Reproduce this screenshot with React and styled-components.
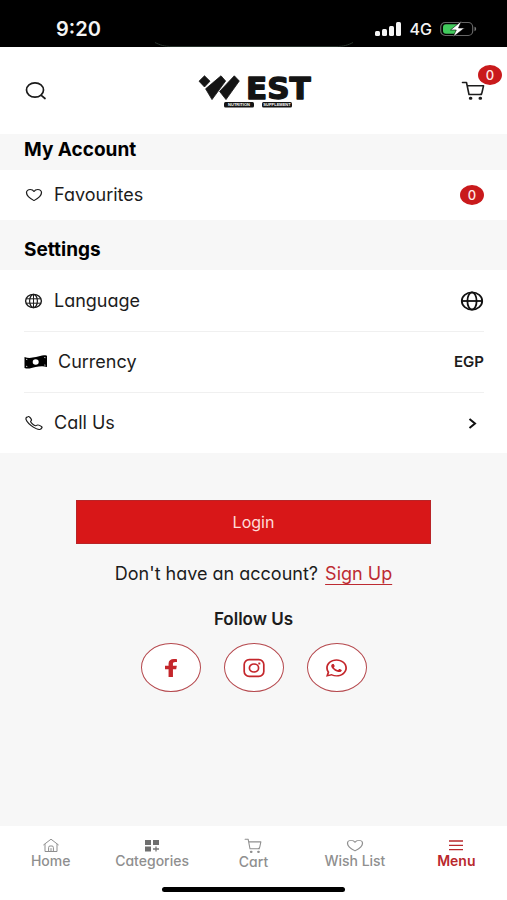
import React from 'react'
import styled, {createGlobalStyle} from 'styled-components'
import {FaFacebookF, FaWhatsapp} from 'react-icons/fa'
import {IoCallOutline, IoHeartOutline} from 'react-icons/io5'

const GlobalStyle = createGlobalStyle`
  * {
    box-sizing: border-box;
  }
  body {
    margin: 0;
    background: #f7f7f7;
    font-family: Inter, "Liberation Sans", sans-serif;
    font-feature-settings: "cv11";
    color: #1c1c1c;
  }
  button {
    font: inherit;
    font-feature-settings: inherit;
    color: inherit;
    background: none;
    border: 0;
    padding: 0;
    cursor: pointer;
  }
  a {
    color: inherit;
    text-decoration: none;
  }
  svg {
    display: block;
    flex-shrink: 0;
  }
`

const Page = styled.div`
  display: flex;
  flex-direction: column;
  min-height: 100vh;
`

const StatusBar = styled.div`
  position: relative;
  display: flex;
  justify-content: space-between;
  height: 47px;
  padding: 11px 30px 0 56px;
  background: #000000;
  color: #f4f4f4;
`

const IslandEdge = styled.svg`
  position: absolute;
  bottom: 0;
  left: 50%;
  transform: translateX(-50%);
`

const Time = styled.span`
  font-size: 20px;
  font-weight: 600;
  line-height: 36px;
`

const StatusIcons = styled.div`
  display: flex;
  align-items: center;
  gap: 8px;
  height: 36px;
`

const Network = styled.span`
  font-size: 16px;
  font-weight: 500;
  line-height: 20px;
`

const Header = styled.header`
  display: grid;
  grid-template-columns: 1fr auto 1fr;
  align-items: center;
  height: 87px;
  padding: 0 22px 0 24px;
  background: #ffffff;
`

const CartButton = styled.button`
  position: relative;
  justify-self: end;
`

const Badge = styled.span`
  display: flex;
  align-items: center;
  justify-content: center;
  width: 24px;
  height: 20px;
  border-radius: 50%;
  background: #c91a1c;
  color: #ffe9e6;
  font-size: 13px;
  font-weight: 500;
  line-height: 20px;
`

const CartBadge = styled(Badge)`
  position: absolute;
  top: -16px;
  right: -17px;
`

const SectionTitle = styled.h2`
  margin: 0;
  padding: ${(props) => (props.$tall ? '18px 24px 8px' : '4px 24px 8px')};
  font-size: 19px;
  font-weight: 700;
  line-height: 24px;
  color: #000000;
`

const Panel = styled.div`
  padding: 0 23px 0 24px;
  background: #ffffff;
`

const Row = styled.button`
  display: flex;
  align-items: center;
  justify-content: space-between;
  width: 100%;
  height: ${(props) => (props.$short ? '50px' : '61px')};
  text-align: left;

  & + & {
    border-top: 1px solid #f0f0f0;
  }
`

const RowLabel = styled.span`
  display: flex;
  align-items: center;
  gap: 10px;
  font-size: 18px;
  line-height: 24px;
`

const CurrencyCode = styled.span`
  font-size: 15px;
  font-weight: 600;
  line-height: 20px;
`

const ChevronBox = styled.span`
  padding-right: 7px;
`

const Account = styled.main`
  flex: 1;
  display: flex;
  flex-direction: column;
  align-items: center;
  padding: 47px 0;
`

const LoginButton = styled.button`
  && {
    width: 70%;
    height: 44px;
    border: 1px solid #b92427;
    background: #d81718;
    color: #ffdcd8;
    font-size: 16px;
  }
`

const SignUpLine = styled.p`
  margin: 18px 0 0;
  font-size: 18px;
  line-height: 24px;
`

const SignUpLink = styled.a`
  margin-left: 2px;
  color: #bd2b32;
  text-decoration: underline;
  text-decoration-thickness: 1px;
  text-underline-offset: 4px;
`

const FollowTitle = styled.h3`
  margin: 21px 0 12px;
  font-size: 17px;
  font-weight: 600;
  line-height: 24px;
`

const SocialList = styled.div`
  display: flex;
  gap: 23px;
`

const SocialLink = styled.a`
  display: flex;
  align-items: center;
  justify-content: center;
  width: 60px;
  height: 49px;
  border: 1px solid #b5484d;
  border-radius: 50%;
  background: #ffffff;
  color: #c4262b;
`

const BottomBar = styled.footer`
  padding-bottom: 8px;
  background: #ffffff;
`

const Tabs = styled.nav`
  display: grid;
  grid-template-columns: repeat(5, 1fr);
  height: 61px;
  padding-top: 12px;
`

const Tab = styled.a`
  display: flex;
  flex-direction: column;
  align-items: center;
  color: ${(props) => (props.$active ? '#b9282c' : '#8f8f8f')};
  font-size: 14px;
  font-weight: ${(props) => (props.$active ? 600 : 500)};
  line-height: 16px;
  white-space: nowrap;
`

const HomeIndicator = styled.div`
  width: 36%;
  height: 5px;
  margin: 0 auto;
  border-radius: 3px;
  background: #000000;
`

// every icon is drawn a bit wider than it is tall
function Wide({icon: Icon, width, height}) {
    return <Icon style={{width, height}} preserveAspectRatio="none" aria-hidden="true"/>
}

function Signal() {
    return (
        <svg width="27" height="14" viewBox="0 0 27 14" fill="#f4f4f4" aria-hidden="true">
            <rect x="0" y="9" width="5" height="5" rx="1.5"/>
            <rect x="7" y="7" width="5" height="7" rx="1.5"/>
            <rect x="14" y="4" width="5" height="10" rx="1.5"/>
            <rect x="21" y="0" width="5" height="14" rx="1.5"/>
        </svg>
    )
}

function Battery() {
    return (
        <svg width="37" height="16" viewBox="0 0 37 16" aria-hidden="true">
            <rect x="0.7" y="1.5" width="32" height="13" rx="4.5" fill="none" stroke="#666666" strokeWidth="1.2"/>
            <path d="M34.5 5.8c2.2.6 2.2 3.8 0 4.4z" fill="#777777"/>
            <path d="M6 3.3h11.5v9.4H6A3 3 0 0 1 3 9.7V6.3a3 3 0 0 1 3-3z" fill="#41c95c"/>
            <path d="M21.5 0 10.5 9h5.800L13 16 24.5 7h-6z" fill="#ffffff" stroke="#000000" strokeWidth="0.6"/>
        </svg>
    )
}

function Logo() {
    return (
        <svg width="126" height="48" viewBox="0 -6 126 48" role="img" aria-label="West Nutrition Supplement">
            <g fill="#141414" stroke="#141414" strokeWidth="0.8" strokeLinejoin="round">
                <path d="M12.500 2.800 18 8.200 12.500 14 7 8.200z"/>
                <path d="M29 2.800 33.600 8 20 26.600 13.600 15.800z"/>
                <path d="M42.300 2.800 47.300 8 34 26.600 27.600 18.400z"/>
            </g>
            <text x="54" y="26" fontFamily="DejaVu Sans" fontWeight="700" fontSize="31" fill="#141414"
                  stroke="#141414" strokeWidth="1.4" strokeLinejoin="round">EST</text>
            <rect x="32" y="29" width="30" height="5.5" rx="1.5" fill="#141414"/>
            <rect x="70" y="29" width="30" height="5.5" rx="1.5" fill="#141414"/>
            <g fontFamily="Liberation Sans" fontWeight="700" fontSize="4" fill="#ffffff" textAnchor="middle">
                <text x="47" y="33.2">NUTRITION</text>
                <text x="85" y="33.2">SUPPLEMENT</text>
            </g>
        </svg>
    )
}

function SearchIcon() {
    return (
        <svg width="24" height="20" viewBox="0 0 24 20" fill="none" stroke="#1a1a1a" strokeWidth="1.7"
             strokeLinecap="round" aria-hidden="true">
            <ellipse cx="11" cy="9" rx="8.5" ry="7.2"/>
            <path d="M17.3 14.3 21 17.5"/>
        </svg>
    )
}

function CartIcon({width, height, weight}) {
    return (
        <svg width={width} height={height} viewBox="0 0 24 20" fill="none" stroke="currentColor"
             strokeWidth={weight} strokeLinejoin="round" strokeLinecap="round" preserveAspectRatio="none"
             aria-hidden="true">
            <path d="M1.5 1.500H5.500L8 13.500H20.500M6.300 4.800H22.500L21 11.500Q20.700 13.500 18.500 13.500"/>
            <path d="M9.300 17.300h.6M19 17.300h.6" strokeWidth="3"/>
        </svg>
    )
}

function InstagramIcon() {
    return (
        <svg width="22" height="20" viewBox="0 0 22 20" fill="none" stroke="currentColor" strokeWidth="1.7" aria-hidden="true">
            <rect x="1.2" y="1.6" width="19.6" height="16.8" rx="5"/>
            <ellipse cx="11" cy="10" rx="4.6" ry="4"/>
            <path d="M15.3 5.5h2" strokeWidth="1.9"/>
        </svg>
    )
}

function Globe() {
    return (
        <svg width="24" height="20" viewBox="0 0 24 20" fill="none" stroke="#111111" strokeWidth="1.8" aria-hidden="true">
            <ellipse cx="12" cy="10" rx="10.2" ry="8.6"/>
            <ellipse cx="12" cy="10" rx="4.6" ry="8.6"/>
            <path d="M2 10h20"/>
        </svg>
    )
}

function GridGlobe() {
    return (
        <svg width="20" height="16" viewBox="0 0 20 16" fill="none" stroke="currentColor" aria-hidden="true">
            <ellipse cx="9.5" cy="8" rx="7.9" ry="6.6" strokeWidth="1.4"/>
            <ellipse cx="9.5" cy="8" rx="3.9" ry="6.6" strokeWidth="1.2"/>
            <path d="M2 5.8h15M2 10.2h15M9.5 1.5v13"/>
        </svg>
    )
}

function Banknote() {
    return (
        <svg width="24" height="14" viewBox="0 0 24 14" aria-hidden="true">
            <path d="M.5 2c4 1.5 7.5.8 11.5 0S19-.6 23 .8V12c-4-1.3-7.5-.7-11.5 0S4.500 14.5.5 13z" fill="#000000"/>
            <ellipse cx="11.7" cy="7" rx="3" ry="2.8" fill="#ffffff"/>
            <path d="M2 4.3l1.3.3M2 11.3l1.3.2M20.2 2.5l1.3.2M20.2 10l1.3.2" stroke="#dddddd" strokeWidth="0.9"/>
        </svg>
    )
}

function Chevron() {
    return (
        <svg width="9" height="11" viewBox="0 0 9 11" fill="none" stroke="#111111" strokeWidth="2" aria-hidden="true">
            <path d="M1.5 1 7 5.5 1.5 10"/>
        </svg>
    )
}

function HomeIcon() {
    return (
        <svg width="16" height="15" viewBox="0 0 16 15" fill="none" stroke="currentColor"
             strokeLinejoin="round" strokeLinecap="round" aria-hidden="true">
            <path d="M.7 6.8 8 1.2l7.3 5.6M2 6.5V13.5h12V6.5M5.6 13.5V9.5q0-1.5 1.4-1.5h2q1.4 0 1.4 1.5v4M8 10.5v3"/>
        </svg>
    )
}

function CategoriesIcon() {
    return (
        <svg width="16" height="15" viewBox="0 0 16 15" aria-hidden="true">
            <path d="M1 2h6v5H1zM9 2h6v5H9zM1 8.5h6v5H1z" fill="#6f6f6f"/>
            <path d="M12 8.5v5M9 11h6" stroke="#777777" strokeWidth="1.3"/>
        </svg>
    )
}

function MenuIcon() {
    return (
        <svg width="16" height="15" viewBox="0 0 16 15" stroke="currentColor" strokeWidth="1.3" aria-hidden="true">
            <path d="M1 3h14M1 7.3h14M1 11.6h14"/>
        </svg>
    )
}

export default function App() {
    return (
        <Page>
            <GlobalStyle/>
            <StatusBar>
                <Time>9:20</Time>
                <StatusIcons>
                    <Signal/>
                    <Network>4G</Network>
                    <Battery/>
                </StatusIcons>
                <IslandEdge width="200" height="5" viewBox="0 0 200 5" fill="none" stroke="#28332c" aria-hidden="true">
                    <path d="M1 .5C6 3 10 4.5 18 4.5H182c8 0 12-1.5 17-4"/>
                </IslandEdge>
            </StatusBar>

            <Header>
                <button type="button" aria-label="Search"><SearchIcon/></button>
                <a href="#home"><Logo/></a>
                <CartButton type="button" aria-label="Cart">
                    <CartIcon width={24} height={20} weight={1.6}/>
                    <CartBadge>0</CartBadge>
                </CartButton>
            </Header>

            <SectionTitle>My Account</SectionTitle>
            <Panel>
                <Row type="button" $short>
                    <RowLabel><Wide icon={IoHeartOutline} width={20} height={16}/>Favourites</RowLabel>
                    <Badge>0</Badge>
                </Row>
            </Panel>

            <SectionTitle $tall>Settings</SectionTitle>
            <Panel>
                <Row type="button">
                    <RowLabel><GridGlobe/>Language</RowLabel>
                    <Globe/>
                </Row>
                <Row type="button">
                    <RowLabel><Banknote/>Currency</RowLabel>
                    <CurrencyCode>EGP</CurrencyCode>
                </Row>
                <Row type="button">
                    <RowLabel><Wide icon={IoCallOutline} width={20} height={16}/>Call Us</RowLabel>
                    <ChevronBox><Chevron/></ChevronBox>
                </Row>
            </Panel>

            <Account>
                <LoginButton type="button">Login</LoginButton>
                <SignUpLine>Don't have an account? <SignUpLink href="#signup">Sign Up</SignUpLink></SignUpLine>
                <FollowTitle>Follow Us</FollowTitle>
                <SocialList>
                    <SocialLink href="#facebook" aria-label="Facebook">
                        <Wide icon={FaFacebookF} width={14} height={18}/>
                    </SocialLink>
                    <SocialLink href="#instagram" aria-label="Instagram">
                        <InstagramIcon/>
                    </SocialLink>
                    <SocialLink href="#whatsapp" aria-label="WhatsApp">
                        <Wide icon={FaWhatsapp} width={21} height={20}/>
                    </SocialLink>
                </SocialList>
            </Account>

            <BottomBar>
                <Tabs>
                    <Tab href="#home"><HomeIcon/>Home</Tab>
                    <Tab href="#categories"><CategoriesIcon/>Categories</Tab>
                    <Tab href="#cart"><CartIcon width={18} height={16} weight={1.4}/>Cart</Tab>
                    <Tab href="#wishlist"><Wide icon={IoHeartOutline} width={20} height={15}/>Wish List</Tab>
                    <Tab href="#menu" $active><MenuIcon/>Menu</Tab>
                </Tabs>
                <HomeIndicator/>
            </BottomBar>
        </Page>
    )
}
